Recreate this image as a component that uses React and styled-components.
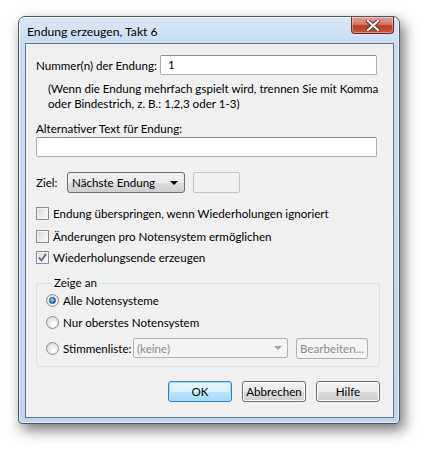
import React from "react";
import styled, { createGlobalStyle } from "styled-components";

const Global = createGlobalStyle`
  html, body {
    margin: 0;
    padding: 0;
    background: #ffffff;
  }
  body {
    font-family: "Segoe UI", Lato, "Noto Sans", sans-serif;
    font-size: 11.6px;
    line-height: 15px;
    color: #000;
  }
`;

const Desktop = styled.div`
  width: 432px;
  height: 451px;
  overflow: hidden;
  padding: 16px 0 0 18px;
  box-sizing: border-box;
`;

const Window = styled.div`
  width: 382px;
  height: 408px;
  box-sizing: border-box;
  border: 1px solid #4d5560;
  border-radius: 7px 7px 4px 4px;
  background: linear-gradient(to bottom, #d9e8f7 0px, #c9ddf2 26px, #bfd6ee 100%);
  box-shadow: 4px 6px 14px rgba(0, 0, 0, 0.55), inset 0 0 0 1px rgba(255, 255, 255, 0.6);
  display: flex;
  flex-direction: column;
  padding: 0 5px 5px 6px;
`;

const TitleBar = styled.div`
  height: 26px;
  display: flex;
  align-items: flex-start;
  justify-content: space-between;
`;

const Title = styled.div`
  padding: 7px 0 0 2px;
  font-size: 12.2px;
  color: #000;
`;

const CloseButton = styled.div`
  width: 43px;
  height: 17px;
  box-sizing: border-box;
  border: 1px solid #6b2b25;
  border-top: none;
  border-radius: 0 0 4px 4px;
  background: linear-gradient(to bottom, #e5a296 0%, #d47867 45%, #bf3a25 55%, #c8563e 100%);
  box-shadow: inset 0 0 0 1px rgba(255, 255, 255, 0.35);
  display: flex;
  align-items: center;
  justify-content: center;
`;

const Client = styled.div`
  flex: 1;
  border: 1px solid #6a7684;
  background: #f0f0f0;
  display: flex;
  flex-direction: column;
  padding: 0 13px 0 10px;
`;

const Row = styled.div`
  display: flex;
  align-items: center;
  margin-top: ${(p) => p.$mt || 0}px;
  margin-right: ${(p) => p.$mr || 0}px;
`;

const Label = styled.span`
  width: ${(p) => (p.$w ? `${p.$w}px` : "auto")};
  flex-shrink: 0;
  white-space: nowrap;
`;

const TextInput = styled.div`
  flex: 1;
  height: 20px;
  box-sizing: border-box;
  border: 1px solid #abadb3;
  border-top-color: #8e8f8f;
  border-radius: 2px;
  background: #fff;
  padding: 0 7px;
  line-height: 18px;
`;

const Help = styled.div`
  margin: 6px 0 0 12px;
  white-space: nowrap;
`;

const Combo = styled.div`
  width: ${(p) => p.$w}px;
  height: 21px;
  box-sizing: border-box;
  border: 1px solid #707070;
  border-radius: 3px;
  background: linear-gradient(to bottom, #f2f2f2 0%, #ebebeb 50%, #dddddd 51%, #cfcfcf 100%);
  display: flex;
  align-items: center;
  justify-content: space-between;
  padding: 0 6px 0 4px;
  white-space: nowrap;
`;

const DisabledCombo = styled(Combo)`
  height: 20px;
  border-color: #b5b2b2;
  border-radius: 2px;
  background: #f4f4f4;
  color: #8d8d8d;
  padding: 0 5px 0 3px;
`;

const Arrow = styled.span`
  width: 0;
  height: 0;
  border-left: 4px solid transparent;
  border-right: 4px solid transparent;
  border-top: 4px solid ${(p) => (p.$disabled ? "#a0a0a0" : "#000")};
`;

const EmptyBox = styled.div`
  width: 47px;
  height: 21px;
  box-sizing: border-box;
  border: 1px solid #c4c4c4;
  border-radius: 2px;
  background: #f0f0f0;
  margin-left: 8px;
`;

const CheckList = styled.div`
  margin-top: 8px;
`;

const CheckRow = styled.div`
  display: flex;
  align-items: center;
  height: ${(p) => p.$h || 22}px;
  width: ${(p) => (p.$w ? `${p.$w}px` : "auto")};
  flex-shrink: 0;
  gap: 4px;
  white-space: nowrap;
`;

const Box = styled.span`
  width: 13px;
  height: 13px;
  box-sizing: border-box;
  border: 1px solid #8f8f8f;
  background: linear-gradient(135deg, #d6d6d6 0%, #ededed 60%, #fbfbfb 100%);
  box-shadow: inset 0 0 0 1px #f4f4f4;
  display: flex;
  align-items: center;
  justify-content: center;
  flex-shrink: 0;
`;

const Radio = styled.span`
  width: 13px;
  height: 13px;
  box-sizing: border-box;
  border-radius: 50%;
  border: 1px solid #8f8f8f;
  background: radial-gradient(circle at 60% 65%, #ffffff 0%, #e6e6e6 55%, #cfcfcf 100%);
  display: flex;
  align-items: center;
  justify-content: center;
  flex-shrink: 0;
`;

const Dot = styled.span`
  width: 7px;
  height: 7px;
  border-radius: 50%;
  background: radial-gradient(circle at 40% 35%, #a8dcfb 0%, #2b8fd6 55%, #0d3d6e 100%);
  border: 1px solid #1e4a78;
  box-sizing: border-box;
`;

const Group = styled.fieldset`
  margin: 8px 0 0 0;
  border: 1px solid #d5dfe5;
  border-radius: 3px;
  padding: 0 10px 7px 9px;
  min-width: 0;
`;

const Legend = styled.legend`
  padding: 0 2px;
  margin-left: 6px;
  line-height: 14px;
`;

const Button = styled.div`
  width: 64px;
  height: 21px;
  box-sizing: border-box;
  border: 1px solid ${(p) => (p.$default ? "#3c7fb1" : "#707070")};
  border-radius: 3px;
  background: ${(p) =>
    p.$default
      ? "linear-gradient(to bottom, #eaf6fd 0%, #d9f0fc 50%, #bee6fd 51%, #a7d9f5 100%)"
      : "linear-gradient(to bottom, #f2f2f2 0%, #ebebeb 50%, #dddddd 51%, #cfcfcf 100%)"};
  box-shadow: inset 0 0 0 1px ${(p) => (p.$default ? "#9fdcf9" : "#fcfcfc")};
  color: ${(p) => (p.$disabled ? "#8d8d8d" : "#000")};
  display: flex;
  align-items: center;
  justify-content: center;
  white-space: nowrap;
`;

const SmallButton = styled(Button)`
  width: 72px;
  border-color: #adb2b5;
  background: #f4f4f4;
  box-shadow: none;
  margin-left: 8px;
`;

const ButtonBar = styled.div`
  display: flex;
  justify-content: flex-end;
  gap: 10px;
  margin-top: 14px;
`;

function Check({ checked, children }) {
  return (
    <>
      <Box>
        {checked && (
          <svg width="9" height="9" viewBox="0 0 9 9">
            <path d="M1 4.5 L3.5 7.5 L8 1" fill="none" stroke="#4b5f94" strokeWidth="1.6" />
          </svg>
        )}
      </Box>
      <span>{children}</span>
    </>
  );
}

export default function App() {
  return (
    <Desktop>
      <Global />
      <Window>
        <TitleBar>
          <Title>Endung erzeugen, Takt 6</Title>
          <CloseButton>
            <svg width="14" height="11" viewBox="0 0 14 11">
              <path d="M2 1 L12 10 M12 1 L2 10" stroke="#5a2a26" strokeWidth="4" strokeLinecap="square" />
              <path d="M2 1 L12 10 M12 1 L2 10" stroke="#ffffff" strokeWidth="2.2" strokeLinecap="square" />
            </svg>
          </CloseButton>
        </TitleBar>
        <Client>
          <Row $mt={11} $mr={3}>
            <Label $w={124}>Nummer(n) der Endung:</Label>
            <TextInput>1</TextInput>
          </Row>
          <Help>
            (Wenn die Endung mehrfach gspielt wird, trennen Sie mit Komma
            <br />
            oder Bindestrich, z. B.: 1,2,3 oder 1-3)
          </Help>
          <Row $mt={10}>
            <Label>Alternativer Text für Endung:</Label>
          </Row>
          <Row $mt={1} $mr={3}>
            <TextInput />
          </Row>
          <Row $mt={15}>
            <Label $w={31}>Ziel:</Label>
            <Combo $w={118}>
              <span>Nächste Endung</span>
              <Arrow />
            </Combo>
            <EmptyBox />
          </Row>
          <CheckList>
            <CheckRow $h={24}>
              <Check>Endung überspringen, wenn Wiederholungen ignoriert</Check>
            </CheckRow>
            <CheckRow $h={22}>
              <Check>Änderungen pro Notensystem ermöglichen</Check>
            </CheckRow>
            <CheckRow $h={21}>
              <Check checked>Wiederholungsende erzeugen</Check>
            </CheckRow>
          </CheckList>
          <Group>
            <Legend>Zeige an</Legend>
            <CheckRow $h={21}>
              <Radio>
                <Dot />
              </Radio>
              <span>Alle Notensysteme</span>
            </CheckRow>
            <CheckRow $h={23}>
              <Radio />
              <span>Nur oberstes Notensystem</span>
            </CheckRow>
            <Row $mt={3}>
              <CheckRow $h={22} $w={87}>
                <Radio />
                <span>Stimmenliste:</span>
              </CheckRow>
              <DisabledCombo $w={155}>
                <span>(keine)</span>
                <Arrow $disabled />
              </DisabledCombo>
              <SmallButton $disabled>Bearbeiten...</SmallButton>
            </Row>
          </Group>
          <ButtonBar>
            <Button $default>OK</Button>
            <Button>Abbrechen</Button>
            <Button>Hilfe</Button>
          </ButtonBar>
        </Client>
      </Window>
    </Desktop>
  );
}
